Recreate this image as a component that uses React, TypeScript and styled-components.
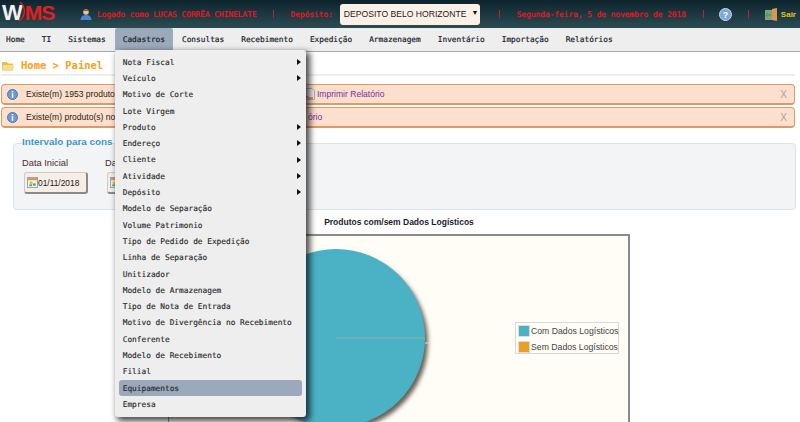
import React from 'react';
import styled, { createGlobalStyle } from 'styled-components';

const mono = `"DejaVu Sans Mono", "Liberation Mono", monospace`;
const sans = `"Liberation Sans", Arial, sans-serif`;

const GlobalStyle = createGlobalStyle`
  * { box-sizing: border-box; }
  html, body { margin: 0; height: 422px; overflow: hidden; background: #fff; }
  body { font-family: ${sans}; }
`;

const Page = styled.div`
  width: 800px;
  height: 422px;
  overflow: hidden;
  position: relative;
`;

const Header = styled.header`
  height: 28px;
  display: flex;
  align-items: center;
  background: linear-gradient(to bottom, #0e242d, #2b4b53);
  font-family: ${mono};
  font-size: 7.8px;
  color: #f0141c;
  -webkit-text-stroke: 0.2px #f0141c;
`;

const Logo = styled.div`
  width: 80px;
  padding: 0 0 3px 2px;
  display: flex;
  align-items: center;
  font-family: ${sans};
  font-weight: 700;
  font-size: 21px;
  letter-spacing: -1px;
  color: #e02020;
  position: relative;
  -webkit-text-stroke: 0;

  b { font-size: 22px; color: #f4f0ee; margin-right: 3px; }
  svg { position: absolute; left: 16px; top: 1px; }
`;

const HeaderText = styled.span<{ $left?: number }>`
  margin-left: ${p => p.$left ?? 0}px;
  white-space: nowrap;
`;

const Pipe = styled.i<{ $left: number }>`
  width: 1px;
  height: 8px;
  background: #c4202a;
  margin-left: ${p => p.$left}px;
  flex: none;
`;

const DepotSelect = styled.div`
  flex: none;
  width: 140px;
  height: 21px;
  margin-left: 7px;
  padding: 0 0 0 4px;
  display: flex;
  align-items: center;
  background: #fbf0e6;
  border-radius: 3px;
  font-family: ${sans};
  font-size: 8.6px;
  color: #222;
  white-space: nowrap;
  -webkit-text-stroke: 0;

  span { margin: -3px 0 0 5px; font-size: 7px; color: #111; }
`;

const Exit = styled.span`
  margin-left: 3px;
  font-family: ${sans};
  font-size: 8px;
  font-weight: 700;
  color: #e6c020;
  -webkit-text-stroke: 0;
`;

const Nav = styled.nav`
  height: 24px;
  display: flex;
  gap: 1px;
  margin-left: -2px;
  background: #eeeeee;
  border-bottom: 1px solid #a8a8a8;
  font-family: ${mono};
  font-size: 7.8px;
  color: #1c232b;
  -webkit-text-stroke: 0.2px #1c232b;
`;

const NavItem = styled.div<{ $active?: boolean }>`
  position: relative;
  height: 22px;
  padding: 0 8px;
  display: flex;
  align-items: center;
  border-radius: 2px 2px 0 0;
  background: ${p => (p.$active ? '#9ca9bb' : 'transparent')};
`;

const Dropdown = styled.div`
  position: absolute;
  z-index: 5;
  left: 0;
  top: 22px;
  width: 191px;
  padding: 4px 4px;
  background: #eeeeee;
  border-radius: 3px;
  box-shadow: 3px 3px 6px 1px rgba(0, 0, 0, 0.72);
  color: #2a2a2a;
  -webkit-text-stroke: 0.15px #2a2a2a;
`;

const DropItem = styled.div<{ $selected?: boolean; $sub?: boolean }>`
  position: relative;
  height: 16.3px;
  padding: 0 4px;
  display: flex;
  align-items: center;
  border-radius: 3px;
  white-space: nowrap;
  background: ${p => (p.$selected ? '#9ca9bb' : 'transparent')};

  &::after {
    content: '';
    display: ${p => (p.$sub ? 'block' : 'none')};
    position: absolute;
    right: 1px;
    top: 5px;
    border-left: 4px solid #111;
    border-top: 3px solid transparent;
    border-bottom: 3px solid transparent;
  }
`;

const Content = styled.main`
  padding: 0 5px 0 1px;
`;

const Breadcrumb = styled.h1`
  margin: 0;
  height: 24px;
  padding: 4px 0 0 1px;
  display: flex;
  align-items: center;
  gap: 7px;
  border-bottom: 2px solid #eeeeee;
  font-family: ${mono};
  font-size: 10.5px;
  font-weight: 700;
  color: #f8a020;
`;

const Alert = styled.div`
  height: 21px;
  margin-top: 2px;
  padding: 0 7px 0 5px;
  display: flex;
  align-items: center;
  background: #fcdfcd;
  border: 1px solid #dd9a66;
  border-bottom-width: 2px;
  border-radius: 4px;
  font-size: 8.55px;
  color: #2a1c14;
  white-space: nowrap;
`;

const AlertText = styled.span<{ $width: number }>`
  width: ${p => p.$width}px;
  margin-left: 8px;
  overflow: hidden;
`;

const ReportLink = styled.a`
  margin-left: 2px;
  flex: 1;
  color: #7a2f9e;
`;

const Close = styled.span`
  font-size: 10px;
  color: #a8a29c;
`;

const AlertStack = styled.div`
  margin-top: 6px;
  display: flex;
  flex-direction: column;
  gap: 0;
`;

const Fieldset = styled.fieldset`
  margin: 8px -1px 0 12px;
  padding: 4px 8px 14px 8px;
  height: 74px;
  background: #f3f4f6;
  border: 1px solid #d8e4ee;
  border-radius: 4px;
  min-width: 0;
`;

const Legend = styled.legend`
  padding: 0 0 4px;
  font-size: 9.9px;
  font-weight: 700;
  color: #3a96cc;
`;

const Fields = styled.div`
  display: flex;
  gap: 17px;
  margin-top: 3px;
`;

const Field = styled.div`
  width: 66px;
  font-size: 9.3px;
  color: #4a2a1c;
`;

const DateButton = styled.button`
  width: 64px;
  height: 22px;
  margin: 4px 0 0 2px;
  padding: 0 0 0 2px;
  display: flex;
  align-items: center;
  gap: 0;
  background: #f6ede5;
  border: 1px solid #cfcac4;
  border-right: 2px solid #8d8a86;
  border-bottom: 2px solid #8d8a86;
  border-radius: 3px;
  font-family: ${sans};
  font-size: 8.4px;
  color: #1a1a1a;
`;

const ChartSection = styled.section`
  width: 462px;
  margin: 7px 0 0 168px;
`;

const ChartTitle = styled.div`
  height: 17px;
  text-align: center;
  font-size: 8.5px;
  font-weight: 700;
  color: #1c1c2c;
`;

const ChartBox = styled.div`
  position: relative;
  height: 200px;
  background: #fffdf6;
  border: 1px solid #8a8a8a;
  border-top-width: 2px;
  border-right-width: 2px;
`;

const ChartLegend = styled.div`
  position: absolute;
  right: 9px;
  top: 86px;
  width: 104px;
  height: 32px;
  padding: 2px 2px;
  background: #fffdf6;
  border: 1px solid #d8d8d8;
  display: flex;
  flex-direction: column;
  gap: 4px;
  font-size: 8.7px;
  color: #444;
`;

const LegendRow = styled.div`
  height: 12px;
  display: flex;
  align-items: center;
  gap: 1px;
  white-space: nowrap;
`;

const Swatch = styled.i<{ $color: string }>`
  width: 12px;
  height: 12px;
  flex: none;
  background: ${p => p.$color};
  border: 1px solid #ddd;
`;

const UserIcon = () => (
  <svg width="12" height="12" viewBox="0 0 12 12" style={{ flex: 'none' }}>
    <path d="M0.5 12 C1 8 3 7 6 7 C9 7 11 8 11.5 12 Z" fill="#4a86d0" />
    <circle cx="6" cy="4" r="2.8" fill="#eec39a" />
    <path d="M3 3.6 C3 1 9 1 9 3.6 C7 2.6 5 2.6 3 3.6 Z" fill="#7a4a24" />
  </svg>
);

const HelpIcon = () => (
  <svg width="13" height="13" viewBox="0 0 13 13" style={{ flex: 'none', marginLeft: 15 }}>
    <circle cx="6.5" cy="6.5" r="6" fill="#7ea6dc" stroke="#c6d8f2" />
    <text x="6.5" y="9.6" textAnchor="middle" fontSize="9" fontWeight="700" fill="#fff" stroke="none" fontFamily="Liberation Sans">?</text>
  </svg>
);

const DoorIcon = () => (
  <svg width="14" height="13" viewBox="0 0 14 13" style={{ flex: 'none', marginLeft: 15 }}>
    <rect x="1" y="2" width="9" height="10" fill="#8a9a8a" />
    <path d="M8 1 L13 0 L13 13 L8 12 Z" fill="#d89a4a" />
    <path d="M1 7 L4 4 L4 6 L7 6 L7 8 L4 8 L4 10 Z" fill="#3cb03c" />
  </svg>
);

const InfoIcon = () => (
  <svg width="11" height="11" viewBox="0 0 11 11" style={{ flex: 'none' }}>
    <circle cx="5.5" cy="5.5" r="5" fill="#6d9ad4" stroke="#4a78b4" />
    <rect x="4.8" y="2" width="1.4" height="1.4" fill="#fff" />
    <rect x="4.8" y="4.2" width="1.4" height="4.6" fill="#fff" />
  </svg>
);

const FolderIcon = () => (
  <svg width="12" height="9" viewBox="0 0 12 9" style={{ flex: 'none', marginTop: 2 }}>
    <path d="M0 0 H5 L6 1.5 H11 V9 H0 Z" fill="#e8c050" />
    <path d="M1 3 H12 L11 9 H0 Z" fill="#f6dc8a" />
  </svg>
);

const DocIcon = () => (
  <svg width="10" height="12" viewBox="0 0 10 12" style={{ flex: 'none' }}>
    <path d="M1 0.5 H7 L9.5 3 V11.5 H1 Z" fill="#f4f0ee" stroke="#b4b0ac" />
    <path d="M2 8 C2 11 5 10 8 10" fill="none" stroke="#d04030" />
  </svg>
);

const CalendarIcon = () => (
  <svg width="11" height="11" viewBox="0 0 12 12" style={{ flex: 'none' }}>
    <rect x="0.5" y="0.5" width="11" height="11" fill="#eef2f6" stroke="#88a4c4" />
    <rect x="1" y="1" width="10" height="2.5" fill="#e8924a" />
    <rect x="3" y="5" width="3" height="2.5" fill="#e8b04a" />
    <rect x="6.5" y="7" width="3" height="2.5" fill="#58a858" />
    <rect x="2.5" y="8" width="3" height="2" fill="#58a858" />
  </svg>
);

const menuItems: [string, boolean?, boolean?][] = [
  ['Nota Fiscal', true],
  ['Veículo', true],
  ['Motivo de Corte'],
  ['Lote Virgem'],
  ['Produto', true],
  ['Endereço', true],
  ['Cliente', true],
  ['Atividade', true],
  ['Depósito', true],
  ['Modelo de Separação'],
  ['Volume Patrimonio'],
  ['Tipo de Pedido de Expedição'],
  ['Linha de Separação'],
  ['Unitizador'],
  ['Modelo de Armazenagem'],
  ['Tipo de Nota de Entrada'],
  ['Motivo de Divergência no Recebimento'],
  ['Conferente'],
  ['Modelo de Recebimento'],
  ['Filial'],
  ['Equipamentos', false, true],
  ['Empresa'],
];

const navItems = ['Home', 'TI', 'Sistemas', 'Cadastros', 'Consultas', 'Recebimento', 'Expedição', 'Armazenagem', 'Inventário', 'Importação', 'Relatórios'];

const App = () => {
  return (
    <Page>
      <GlobalStyle />
      <Header>
        <Logo>
          <b>W</b>MS
          <svg width="14" height="22" viewBox="0 0 14 22">
            <path d="M4 1 C10 6 10 15 3 20" fill="none" stroke="#e02020" strokeWidth="1.4" />
          </svg>
        </Logo>
        <UserIcon />
        <HeaderText $left={5}>Logado como LUCAS CORRÊA CHINELATE</HeaderText>
        <Pipe $left={16} />
        <HeaderText $left={17}>Depósito:</HeaderText>
        <DepotSelect>
          DEPOSITO BELO HORIZONTE<span>▼</span>
        </DepotSelect>
        <Pipe $left={19} />
        <HeaderText $left={17}>Segunda-feira, 5 de novembro de 2018</HeaderText>
        <Pipe $left={17} />
        <HelpIcon />
        <Pipe $left={16} />
        <DoorIcon />
        <Exit>Sair</Exit>
      </Header>
      <Nav>
        {navItems.map(item => (
          <NavItem key={item} $active={item === 'Cadastros'}>
            {item}
            {item === 'Cadastros' && (
              <Dropdown>
                {menuItems.map(([label, sub, selected]) => (
                  <DropItem key={label} $sub={sub} $selected={selected}>{label}</DropItem>
                ))}
              </Dropdown>
            )}
          </NavItem>
        ))}
      </Nav>
      <Content>
        <Breadcrumb>
          <FolderIcon />
          Home &gt; Painel
        </Breadcrumb>
        <AlertStack>
          <Alert>
            <InfoIcon />
            <AlertText $width={279}>Existe(m) 1953 produto</AlertText>
            <DocIcon />
            <ReportLink>Imprimir Relatório</ReportLink>
            <Close>X</Close>
          </Alert>
          <Alert>
            <InfoIcon />
            <AlertText $width={280}>Existe(m) produto(s) no</AlertText>
            <ReportLink>ório</ReportLink>
            <Close>X</Close>
          </Alert>
        </AlertStack>
        <Fieldset>
          <Legend>Intervalo para cons</Legend>
          <Fields>
            <Field>
              Data Inicial
              <DateButton><CalendarIcon />01/11/2018</DateButton>
            </Field>
            <Field>
              Da
              <DateButton><CalendarIcon /></DateButton>
            </Field>
          </Fields>
        </Fieldset>
      </Content>
      <ChartSection>
        <ChartTitle>Produtos com/sem Dados Logísticos</ChartTitle>
        <ChartBox>
          <svg width="459" height="198" viewBox="0 0 459 198" style={{ display: 'block' }}>
            <defs>
              <filter id="pieShadow" x="-10%" y="-10%" width="120%" height="120%">
                <feGaussianBlur stdDeviation="2" />
              </filter>
            </defs>
            <circle cx="171" cy="106" r="88" fill="#6a6258" filter="url(#pieShadow)" />
            <circle cx="167" cy="102" r="89" fill="#4bb2c6" />
            <line x1="167" y1="102" x2="256" y2="102" stroke="#8fae9e" />
            <line x1="256" y1="107" x2="262" y2="107" stroke="#dddddd" />
          </svg>
          <ChartLegend>
            <LegendRow><Swatch $color="#4bb2c6" />Com Dados Logísticos</LegendRow>
            <LegendRow><Swatch $color="#eaa022" />Sem Dados Logísticos</LegendRow>
          </ChartLegend>
        </ChartBox>
      </ChartSection>
    </Page>
  );
};

export default App;
